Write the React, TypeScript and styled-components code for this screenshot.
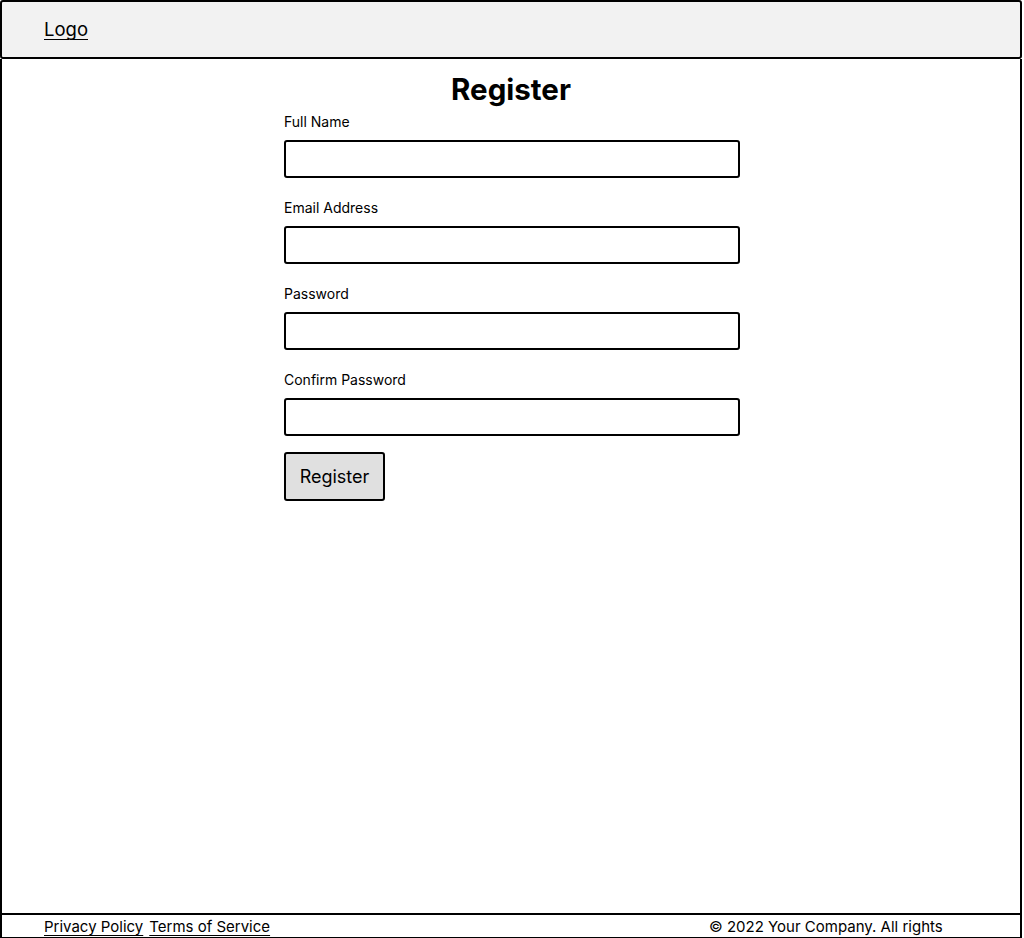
import styled, { createGlobalStyle } from 'styled-components';

const GlobalStyle = createGlobalStyle`
  html, body {
    margin: 0;
    padding: 0;
    background: #ffffff;
    font-family: Inter, 'Liberation Sans', sans-serif;
    color: #000000;
  }
`;

const SPage = styled.div`
  display: flex;
  flex-direction: column;
  width: 1022px;
  height: 938px;
  overflow: hidden;
`;

const SHeader = styled.header`
  display: flex;
  align-items: center;
  flex-shrink: 0;
  box-sizing: border-box;
  height: 59px;
  padding: 0 0 0 42px;
  border: 2px solid #000;
  border-radius: 3px;
  background: #f2f2f2;
`;

const SLink = styled.a<{ $size?: number }>`
  font-size: ${({ $size }) => $size ?? 15}px;
  line-height: 1.2;
  color: #000;
  text-decoration: underline;
  text-underline-offset: 3px;
  text-decoration-thickness: 1px;
`;

const SMain = styled.main`
  display: flex;
  flex-direction: column;
  align-items: center;
  flex: 1;
  box-sizing: border-box;
  padding-top: 12px;
  border-left: 2px solid #000;
  border-right: 2px solid #000;
`;

const STitle = styled.h1`
  margin: 0 0 6px;
  font-size: 29.5px;
  line-height: 36px;
  font-weight: 700;
`;

const SForm = styled.form`
  display: flex;
  flex-direction: column;
  gap: 21px;
  width: 456px;
  margin-left: 2px;
`;

const SField = styled.div`
  display: flex;
  flex-direction: column;
  gap: 10px;
`;

const SLabel = styled.label`
  font-size: 14px;
  line-height: 17px;
`;

const SInput = styled.input`
  box-sizing: border-box;
  height: 38px;
  width: 100%;
  border: 2px solid #000;
  border-radius: 3px;
  background: #fff;
  font-family: inherit;
  font-size: 15px;
`;

const SButton = styled.button`
  box-sizing: border-box;
  align-self: flex-start;
  width: 101px;
  height: 49px;
  margin-top: -5px;
  border: 2px solid #000;
  border-radius: 3px;
  background: #e0e0e0;
  font-family: inherit;
  font-size: 18px;
  color: #000;
`;

const SFooter = styled.footer`
  display: flex;
  justify-content: space-between;
  flex-shrink: 0;
  box-sizing: border-box;
  height: 25px;
  padding: 3px 0 0 42px;
  border: 2px solid #000;
  border-bottom-width: 1px;
  overflow: hidden;
`;

const SFooterLinks = styled.nav`
  display: flex;
  gap: 6px;
`;

const SCopyright = styled.p`
  width: 260px;
  margin: 0 51px 0 0;
  font-size: 15px;
  line-height: 1.2;
`;

const fields = ['Full Name', 'Email Address', 'Password', 'Confirm Password'];

const App = () => {
  return (
    <SPage>
      <GlobalStyle />
      <SHeader>
        <SLink href="#" $size={18.5}>Logo</SLink>
      </SHeader>
      <SMain>
        <STitle>Register</STitle>
        <SForm onSubmit={(e) => e.preventDefault()}>
          {fields.map((label) => (
            <SField key={label}>
              <SLabel>{label}</SLabel>
              <SInput type={label.includes('Password') ? 'password' : 'text'} />
            </SField>
          ))}
          <SButton type="submit">Register</SButton>
        </SForm>
      </SMain>
      <SFooter>
        <SFooterLinks>
          <SLink href="#">Privacy Policy</SLink>
          <SLink href="#">Terms of Service</SLink>
        </SFooterLinks>
        <SCopyright>© 2022 Your Company. All rights reserved.</SCopyright>
      </SFooter>
    </SPage>
  );
};

export default App;
